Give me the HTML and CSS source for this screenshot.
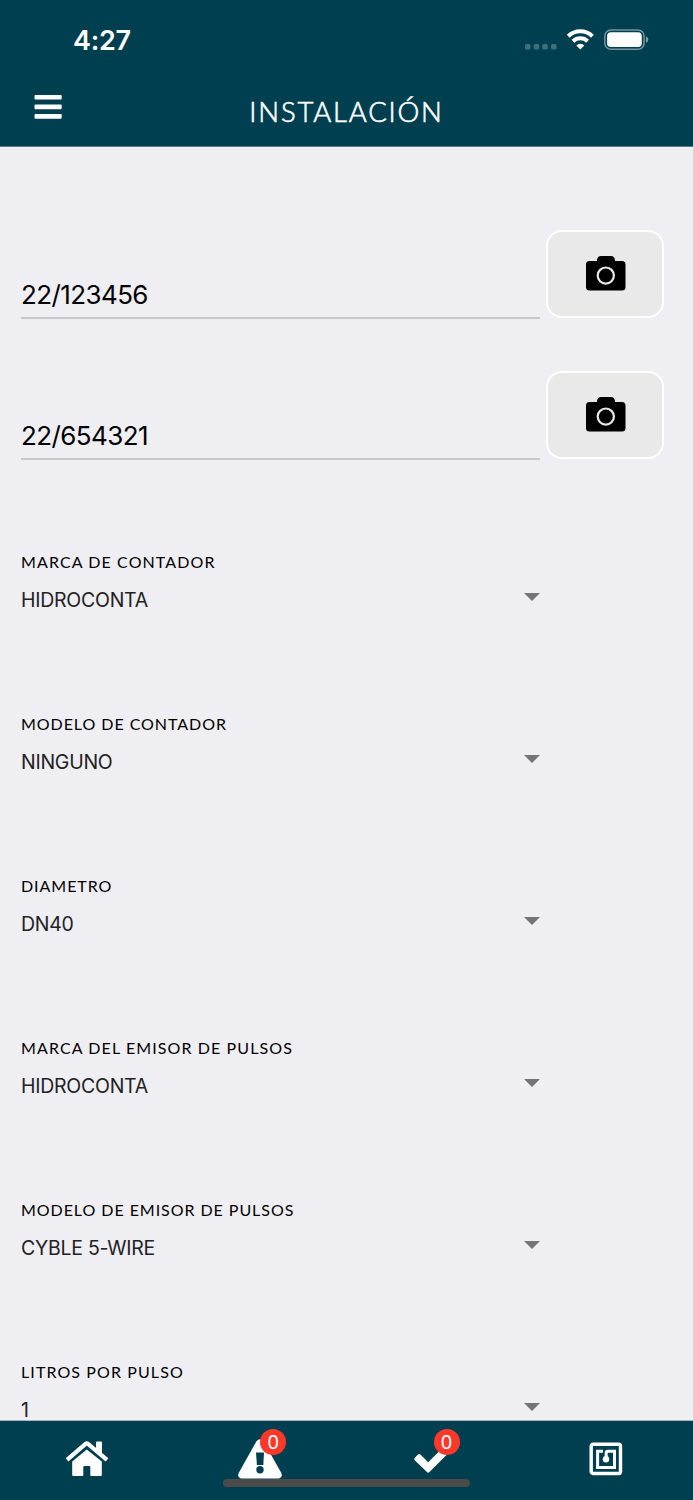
FILE: index.html
```
<!DOCTYPE html>
<html lang="es">
<head>
<meta charset="utf-8">
<title>Instalación</title>
<link rel="stylesheet" href="styles.css">
</head>
<body>
<div class="app">
  <header class="header">
    <div class="status">
      <span class="time">4:27</span>
      <svg class="status-icons" width="125" height="24" viewBox="0 0 125 24">
        <g fill="#fff" fill-opacity=".25"><rect x="0" y="16" width="5.500" height="5.500" rx="1.600"/><rect x="8.700" y="16" width="5.500" height="5.500" rx="1.600"/><rect x="17.200" y="16" width="5.500" height="5.500" rx="1.600"/><rect x="26" y="16" width="5.500" height="5.500" rx="1.600"/></g>
        <g fill="none" stroke="#fff" stroke-width="4"><path d="M43.200 8.200a17.300 17.300 0 0 1 24.200 0"/><path d="M48 13.200a10.700 10.700 0 0 1 14.600 0"/></g>
        <path d="M51.300 17.400a6 6 0 0 1 8 0L55.300 21.600z" fill="#fff"/>
        <rect x="79.800" y="2" width="39.300" height="19.300" rx="6" fill="none" stroke="#fff" stroke-opacity=".45" stroke-width="1.500"/>
        <rect x="82.100" y="4.200" width="34.700" height="14.900" rx="3.800" fill="#fff"/>
        <path d="M121 8.600c3 1 3 5.200 0 6.200z" fill="#fff" fill-opacity=".5"/>
      </svg>
    </div>
    <div class="bar">
      <svg class="menu" width="28" height="24" viewBox="0 0 28 24" fill="#fff"><rect x=".5" y="0" width="27.200" height="4.600" rx="1"/><rect x=".5" y="9.600" width="27.200" height="4.600" rx="1"/><rect x=".5" y="19.100" width="27.200" height="4.600" rx="1"/></svg>
      <h1 class="title">INSTALACIÓN</h1>
    </div>
  </header>

  <main class="content">
    <div class="scan-row">
      <div class="input">22/123456</div>
      <div class="photo"><svg width="40" height="35" viewBox="0 0 40 35"><path d="M3.500 5H11V4Q11.600 0 15 0H25Q28.400 0 29 4V5H36Q39.500 5 39.500 8.500V31Q39.500 34.500 36 34.500H3.500Q0 34.500 0 31V8.500Q0 5 3.500 5Z"/><circle cx="19.800" cy="19.600" r="8.100" fill="none" stroke="#e9e9e9" stroke-width="2.200"/></svg></div>
    </div>
    <div class="scan-row">
      <div class="input">22/654321</div>
      <div class="photo"><svg width="40" height="35" viewBox="0 0 40 35"><path d="M3.500 5H11V4Q11.600 0 15 0H25Q28.400 0 29 4V5H36Q39.500 5 39.500 8.500V31Q39.500 34.500 36 34.500H3.500Q0 34.500 0 31V8.500Q0 5 3.500 5Z"/><circle cx="19.800" cy="19.600" r="8.100" fill="none" stroke="#e9e9e9" stroke-width="2.200"/></svg></div>
    </div>
    <div class="selects">
      <section class="select"><div class="label">MARCA DE CONTADOR</div><div class="value"><span>HIDROCONTA</span><i class="caret"></i></div></section>
      <section class="select"><div class="label snug">MODELO DE CONTADOR</div><div class="value"><span>NINGUNO</span><i class="caret"></i></div></section>
      <section class="select"><div class="label snug">DIAMETRO</div><div class="value"><span>DN40</span><i class="caret"></i></div></section>
      <section class="select"><div class="label">MARCA DEL EMISOR DE PULSOS</div><div class="value"><span>HIDROCONTA</span><i class="caret"></i></div></section>
      <section class="select"><div class="label snug">MODELO DE EMISOR DE PULSOS</div><div class="value"><span>CYBLE 5-WIRE</span><i class="caret"></i></div></section>
      <section class="select last"><div class="label">LITROS POR PULSO</div><div class="value"><span>1</span><i class="caret"></i></div></section>
    </div>
  </main>

  <nav class="nav">
    <div class="tab"><svg width="44" height="36" viewBox="0 0 44 36" fill="#fff"><path d="M2 18.800 20.300 3.100Q21.800 1.900 23.300 3.100L42 18.800" fill="none" stroke="#fff" stroke-width="4.200" stroke-linecap="butt" stroke-linejoin="round"/><path d="M31 1.500Q31 .5 32 .5H36Q37 .5 37 1.500V13.500L31 8.500Z"/><path d="M7.200 20.500 21.800 8.600 36.800 20.500V34Q36.800 35 35.800 35H26.300Q25.300 35 25.300 34V26Q25.300 25 24.300 25H19.300Q18.300 25 18.300 26V34Q18.300 35 17.300 35H8.200Q7.200 35 7.200 34Z"/></svg></div>
    <div class="tab"><svg width="44" height="40" viewBox="0 0 44 40"><path d="M18.500 2.200Q22 -1.500 25.500 2.200L43.300 34Q45 38 41 39.500H3Q-1 38 .7 34Z" fill="#fff"/><path d="M18 13.500H26L25.300 26H18.900Z" fill="#003f50"/><circle cx="22" cy="30.700" r="3.700" fill="#003f50"/></svg><b class="badge">0</b></div>
    <div class="tab"><svg width="44" height="36" viewBox="0 0 44 36"><path d="M3.700 19.200Q2.700 18 3.700 17L7 13.500Q8.200 12.500 9.400 13.500L17.200 21.300 33 5.500 38.500 11 18.200 31.300Q17.200 32.200 16.200 31.300Z" fill="#fff"/></svg><b class="badge">0</b></div>
    <div class="tab"><svg width="34" height="34" viewBox="0 0 34 34" fill="none" stroke="#fff"><rect x="2.200" y="2.200" width="29.300" height="29.300" rx="2" stroke-width="3.400"/><path d="M14 9.200H8.600V25.500H25.500V9.200H19Q17.200 9.200 17.200 11V17" stroke-width="3"/><circle cx="17" cy="17.300" r="3.200" fill="#fff" stroke="none"/></svg></div>
    <div class="home-indicator"></div>
  </nav>
</div>
</body>
</html>
```
FILE: styles.css
```
* { box-sizing: border-box; }
body { margin: 0; background: #efeef3; font-family: Inter, "Liberation Sans", sans-serif; }
.app { width: 693px; height: 1500px; display: flex; flex-direction: column; overflow: hidden; }
.header { height: 147px; flex: none; background: #003f50; border-bottom: 1px solid #5b7c88; color: #fff; }
.status { height: 80px; display: flex; justify-content: space-between; padding: 23px 43px 0 73px; }
.time { font-size: 27px; line-height: 36px; font-weight: 600; letter-spacing: -.3px; }
.status-icons { margin-top: 5px; }
.bar { display: grid; grid-template-columns: 200px 1fr 200px; padding-top: 15px; }
.menu { margin-left: 34px; }
.title { margin: 0; font: 300 27.500px/34px Lato, sans-serif; letter-spacing: 1.800px; -webkit-text-stroke: .6px #fff; text-align: center; white-space: nowrap; }
.content { flex: 1; min-height: 0; padding: 83px 29px 0 21px; }
.scan-row { height: 89px; display: flex; gap: 6px; margin-bottom: 52px; }
.input { width: 519px; height: 89px; border-bottom: 2px solid #c8c7cc; font-size: 26px; line-height: 34px; padding-top: 48px; letter-spacing: -.6px; }
.photo { width: 118px; height: 88px; border: 2px solid #fff; border-radius: 16px; background: #e9e9e9; display: flex; align-items: center; justify-content: center; padding: 0 0 2px 2px; }
.selects { padding-top: 38px; }
.select { height: 162px; width: 519px; }
.last { height: 66px; }
.label { font: 400 16px/24px Lato, sans-serif; letter-spacing: 1.100px; white-space: nowrap; }
.snug { letter-spacing: .950px; }
.value { display: flex; justify-content: space-between; align-items: flex-start; padding-top: 12px; font-size: 19.500px; line-height: 29px; letter-spacing: -.25px; color: #222; }
.caret { margin-top: 7px; border: 8px solid transparent; border-top-color: #747474; border-bottom: 0; }
.nav { height: 80px; flex: none; display: grid; grid-template-columns: repeat(4, 1fr); background: #003f50; border-top: 1px solid #aab7be; position: relative; }
.tab { display: flex; justify-content: center; align-items: center; height: 76px; position: relative; }
.badge { position: absolute; left: 87px; top: 8px; width: 26px; height: 26px; border-radius: 50%; background: #ff3929; color: #fff; font: 400 20px/25px "Noto Sans", sans-serif; text-align: center; }
.home-indicator { position: absolute; left: 223px; top: 58px; width: 247px; height: 8px; border-radius: 4px; background: #4b4b4b; }
```
